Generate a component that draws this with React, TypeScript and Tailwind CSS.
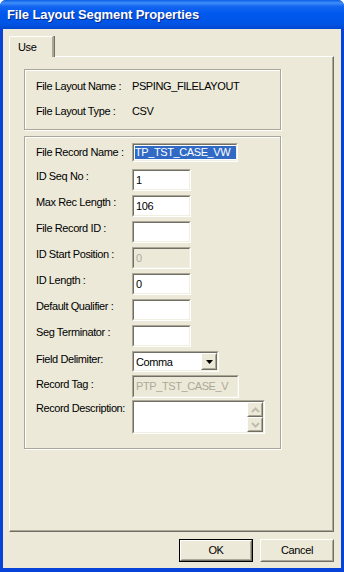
import type { ReactNode } from 'react';

const FONT = { fontFamily: '"Liberation Sans", Arial, sans-serif' };

/** classic 2px sunken edit border */
function Sunken({ className = '', bg = 'bg-white', children }: { className?: string; bg?: string; children?: ReactNode }) {
  return (
    <div className={`border border-t-[#aca899] border-l-[#aca899] border-r-white border-b-white ${className}`}>
      <div className={`h-full w-full border border-t-[#716f64] border-l-[#716f64] border-r-[#f1efe2] border-b-[#f1efe2] overflow-hidden flex ${bg}`}>
        {children}
      </div>
    </div>
  );
}

function Raised({ className = '', children }: { className?: string; children?: ReactNode }) {
  return (
    <div className={`border border-t-white border-l-white border-r-[#716f64] border-b-[#716f64] bg-[#ece9d8] ${className}`}>
      <div className="h-full w-full border border-t-[#ece9d8] border-l-[#ece9d8] border-r-[#aca899] border-b-[#aca899] flex items-center justify-center">
        {children}
      </div>
    </div>
  );
}

function Row({ label, labelTop = 1, height = 26, children }: { label: string; labelTop?: number; height?: number; children: ReactNode }) {
  return (
    <div className="flex" style={{ height }}>
      <div className="w-[96px] shrink-0 text-[11px] leading-[13px] text-black whitespace-nowrap" style={{ paddingTop: labelTop }}>
        {label}
      </div>
      {children}
    </div>
  );
}

function Field({ value = '', w = 'w-[59px]', h = 'h-[22px]', disabled = false }: { value?: string; w?: string; h?: string; disabled?: boolean }) {
  return (
    <Sunken className={`${w} ${h}`} bg={disabled ? 'bg-[#ece9d8]' : 'bg-white'}>
      <span className={`pl-[2px] pt-[3px] text-[11px] leading-[13px] whitespace-nowrap ${disabled ? 'text-[#aca899]' : 'text-black'}`}>
        {value}
      </span>
    </Sunken>
  );
}

function Chevron({ up }: { up?: boolean }) {
  return (
    <svg width="9" height="6" viewBox="0 0 9 6">
      <path d={up ? 'M1 5 L4.5 1.5 L8 5' : 'M1 1 L4.5 4.5 L8 1'} fill="none" stroke="#c0bdb0" strokeWidth="2" />
    </svg>
  );
}

export default function App() {
  return (
    <div className="w-[344px] h-[572px] flex flex-col bg-[#0843d9] rounded-t-[6px] overflow-hidden" style={FONT}>
      {/* title bar */}
      <div className="h-[29px] shrink-0 flex items-center pl-[7px] bg-[linear-gradient(to_bottom,#0a5ce6_0%,#3f8ff8_10%,#1466f0_22%,#0058ee_45%,#0055e5_80%,#0048d0_100%)]">
        <span className="text-white font-bold text-[13px] [text-shadow:1px_1px_0_#0b2a8a] tracking-[-0.1px]">
          File Layout Segment Properties
        </span>
      </div>

      {/* body */}
      <div className="flex-1 mx-[3px] mb-[4px] bg-[#ece9d8] pt-[7px] pl-[6px] pr-[7px] pb-[6px] flex flex-col tracking-[-0.4px]">
        {/* tab */}
        <div className="relative z-10 -mb-[1px] h-[21px] w-[45px] bg-[#ece9d8] border-t border-l border-t-white border-l-white border-r-2 border-r-[#aca899] rounded-tl-[2px] text-[11px] leading-[13px] text-black pl-[8px] pt-[4px] shadow-[1px_0_0_#716f64]">
          Use
        </div>

        {/* panel */}
        <div className="h-[476px] border border-t-white border-l-white border-r-[#716f64] border-b-[#716f64] shadow-[inset_-1px_-1px_0_#aca899] pl-[14px] pt-[12px]">
          {/* group 1 */}
          <div className="w-[257px] h-[61px] border border-[#aca899] shadow-[inset_1px_1px_0_white,1px_1px_0_white] pl-[11px] pt-[10px] flex flex-col gap-[12px] text-[11px] leading-[13px] text-black">
            <div className="flex">
              <span className="w-[96px]">File Layout Name :</span>
              <span>PSPING_FILELAYOUT</span>
            </div>
            <div className="flex">
              <span className="w-[96px]">File Layout Type :</span>
              <span>CSV</span>
            </div>
          </div>

          {/* group 2 */}
          <div className="mt-[6px] w-[257px] h-[313px] border border-[#aca899] shadow-[inset_1px_1px_0_white,1px_1px_0_white] pl-[11px] pt-[6px] flex flex-col">
            <Row label="File Record Name :" labelTop={3}>
              <Sunken className="w-[106px] h-[19px]">
                <span className="ml-[1px] mt-[1px] h-[13px] pr-[6px] bg-[#316ac5] text-white text-[11px] leading-[13px] whitespace-nowrap">
                  TP_TST_CASE_VW
                </span>
              </Sunken>
            </Row>
            <Row label="ID Seq No :">
              <Field value="1" />
            </Row>
            <Row label="Max Rec Length :">
              <Field value="106" />
            </Row>
            <Row label="File Record ID :">
              <Field />
            </Row>
            <Row label="ID Start Position :">
              <Field value="0" disabled />
            </Row>
            <Row label="ID Length :">
              <Field value="0" />
            </Row>
            <Row label="Default Qualifier :">
              <Field />
            </Row>
            <Row label="Seg Terminator :">
              <Field />
            </Row>
            <Row label="Field Delimiter:" labelTop={2} height={24}>
              <Sunken className="w-[87px] h-[21px]">
                <span className="flex-1 pl-[2px] pt-[3px] text-[11px] leading-[13px] text-black">Comma</span>
                <Raised className="w-[16px] h-full">
                  <svg width="7" height="4" viewBox="0 0 7 4">
                    <path d="M0 0 H7 L3.5 4 Z" fill="black" />
                  </svg>
                </Raised>
              </Sunken>
            </Row>
            <Row label="Record Tag :" labelTop={3} height={25}>
              <Field value="PTP_TST_CASE_V" w="w-[107px]" h="h-[23px]" disabled />
            </Row>
            <Row label="Record Description:" labelTop={2} height={34}>
              <Sunken className="w-[133px] h-[34px]">
                <div className="flex-1" />
                <div className="w-[16px] flex flex-col">
                  <Raised className="flex-1">
                    <Chevron up />
                  </Raised>
                  <Raised className="flex-1">
                    <Chevron />
                  </Raised>
                </div>
              </Sunken>
            </Row>
          </div>
        </div>

        {/* buttons */}
        <div className="mt-[7px] flex justify-end gap-[7px]">
          <div className="w-[74px] h-[23px] border border-black">
            <Raised className="w-full h-full">
              <span className="text-[11px] leading-[13px] text-black">OK</span>
            </Raised>
          </div>
          <Raised className="w-[74px] h-[23px]">
            <span className="text-[11px] leading-[13px] text-black">Cancel</span>
          </Raised>
        </div>
      </div>
    </div>
  );
}
